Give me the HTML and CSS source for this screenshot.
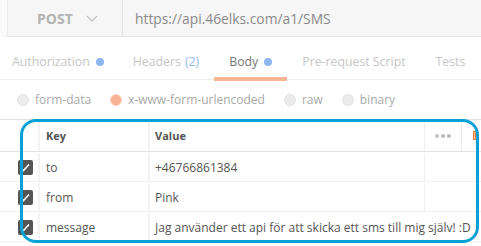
FILE: index.html
```html
<!DOCTYPE html>
<html>
<head>
<meta charset="utf-8">
<link rel="stylesheet" href="styles.css">
</head>
<body>
<div class="page">
  <div class="topbar">
    <div class="reqbox">
      <div class="method">
        <span class="method-name">POST</span>
        <svg class="chev" width="12" height="7" viewBox="0 0 12 7"><polyline points="1,1 6,6 11,1" fill="none" stroke="#c4c4c4" stroke-width="1.3"/></svg>
      </div>
      <div class="url">https://api.46elks.com/a1/SMS</div>
    </div>
  </div>

  <div class="tabs">
    <div class="tab">Authorization<span class="dot"></span></div>
    <div class="tab">Headers <span class="count">(2)</span></div>
    <div class="tab active">Body<span class="dot"></span></div>
    <div class="tab">Pre-request Script</div>
    <div class="tab">Tests</div>
  </div>

  <div class="radios">
    <div class="radio"><span class="circle"></span>form-data</div>
    <div class="radio"><span class="circle on"></span>x-www-form-urlencoded</div>
    <div class="radio"><span class="circle"></span>raw</div>
    <div class="radio"><span class="circle"></span>binary</div>
  </div>

  <div class="table">
    <div class="row head">
      <div class="c-check"></div>
      <div class="c-key">Key</div>
      <div class="c-val">Value</div>
      <div class="c-more"><span class="d"></span><span class="d"></span><span class="d"></span></div>
      <div class="c-bulk"><span class="bulk"></span></div>
    </div>
    <div class="row">
      <div class="c-check"><span class="cb"><svg width="15" height="15" viewBox="0 0 15 15"><polyline points="4,9 5.5,10.5 11,4.5" fill="none" stroke="#fff" stroke-width="1.6"/></svg></span></div>
      <div class="c-key">to</div>
      <div class="c-val">+46766861384</div>
      <div class="c-more"></div>
      <div class="c-bulk"></div>
    </div>
    <div class="row">
      <div class="c-check"><span class="cb"><svg width="15" height="15" viewBox="0 0 15 15"><polyline points="4,9 5.5,10.5 11,4.5" fill="none" stroke="#fff" stroke-width="1.6"/></svg></span></div>
      <div class="c-key">from</div>
      <div class="c-val">Pink</div>
      <div class="c-more"></div>
      <div class="c-bulk"></div>
    </div>
    <div class="row">
      <div class="c-check"><span class="cb"><svg width="15" height="15" viewBox="0 0 15 15"><polyline points="4,9 5.5,10.5 11,4.5" fill="none" stroke="#fff" stroke-width="1.6"/></svg></span></div>
      <div class="c-key">message</div>
      <div class="c-val wide">Jag använder ett api för att skicka ett sms till mig själv! :D</div>
    </div>
  </div>

  <div class="highlight"></div>
</div>
</body>
</html>
```

FILE: styles.css
```css
* { box-sizing: border-box; }
html, body { margin: 0; padding: 0; background: #fff; }
body {
  font-family: "Open Sans", "Liberation Sans", sans-serif;
  width: 481px;
  height: 246px;
  overflow: hidden;
}
.page { position: relative; width: 481px; height: 246px; }

.topbar {
  height: 37px;
  background: #fafafa;
  padding-left: 7px;
}
.reqbox {
  display: flex;
  height: 37px;
  background: #f6f6f6;
  border-left: 1px solid #ececec;
  border-bottom: 1px solid #e6e6e6;
}
.method {
  width: 115px;
  display: flex;
  align-items: center;
  padding-left: 29px;
  border-right: 1px solid #e6e6e6;
}
.method-name {
  font-size: 14px;
  font-weight: 700;
  color: #b3b3b3;
}
.chev { margin-left: 13px; margin-top: 1px; }
.url {
  display: flex;
  align-items: center;
  padding-left: 12px;
  font-size: 13.8px;
  color: #8a8a8a;
  white-space: nowrap;
}

.tabs {
  display: flex;
  height: 43px;
  margin-left: -3px;
  border-bottom: 1px solid #ececec;
}
.tab {
  display: flex;
  align-items: center;
  padding: 9px 15px 0;
  font-size: 12.3px;
  color: #c6c6c6;
  white-space: nowrap;
  border-bottom: 3px solid transparent;
  margin-bottom: -1px;
}
.tab:nth-child(2) { padding-left: 14px; }
.tab.active {
  color: #777;
  border-bottom: 4px solid #f7b595;
  margin-bottom: -2px;
}
.dot {
  width: 8px;
  height: 8px;
  border-radius: 50%;
  background: #8fb6f1;
  margin-left: 6px;
}
.count { color: #94b9ef; margin-left: 4px; }

.radios {
  display: flex;
  align-items: center;
  height: 39px;
  padding-left: 17px;
}
.radio {
  display: flex;
  align-items: center;
  font-size: 12px;
  color: #aaa;
  margin-right: 19px;
  white-space: nowrap;
}
.circle {
  width: 12px;
  height: 12px;
  border-radius: 50%;
  background: #ebebeb;
  border: 1px solid #e2e2e2;
  margin-right: 6px;
}
.circle.on {
  background: #f6b495;
  border: 1px solid #f9d0bd;
}

.table {
  border-top: 1px solid #e2e2e2;
}
.row {
  display: grid;
  grid-template-columns: 38px 110px 276px 37px 20px;
  height: 30px;
  padding-top: 1px;
  border-bottom: 1px solid #f0f0f0;
  font-size: 12px;
  color: #555;
}
.row.head {
  height: 32px;
  padding-top: 0;
  border-bottom: 1px solid #e2e2e2;
}
.row > div {
  display: flex;
  align-items: center;
}
.c-check { justify-content: flex-end; padding-right: 5px; }
.c-key {
  border-left: 2px solid #f3f3f3;
  padding-left: 6px;
}
.c-val {
  border-left: 2px solid #f3f3f3;
  padding-left: 5px;
  white-space: nowrap;
}
.c-val.wide { grid-column: 3 / 6; }
.head .c-key, .head .c-val {
  font-size: 11px;
  font-weight: 700;
  color: #555;
}
.c-more {
  border-left: 1px solid #eee;
  justify-content: center;
  gap: 2px;
}
.d {
  width: 4px;
  height: 4px;
  border-radius: 50%;
  background: #bcbcbc;
}
.head .c-bulk { border-left: 1px solid #eee; padding-left: 11px; }
.bulk {
  width: 5px;
  height: 9px;
  background: #f07b2c;
  border: 1px solid #f07b2c;
  box-shadow: inset 0 0 0 1px #f9b98e;
}
.cb {
  width: 15px;
  height: 15px;
  background: #555;
  border-radius: 2px;
  display: flex;
}

.highlight {
  position: absolute;
  left: 20px;
  top: 119px;
  width: 459px;
  height: 124px;
  border: 3px solid #09a0d6;
  border-radius: 16px;
  pointer-events: none;
}
```
